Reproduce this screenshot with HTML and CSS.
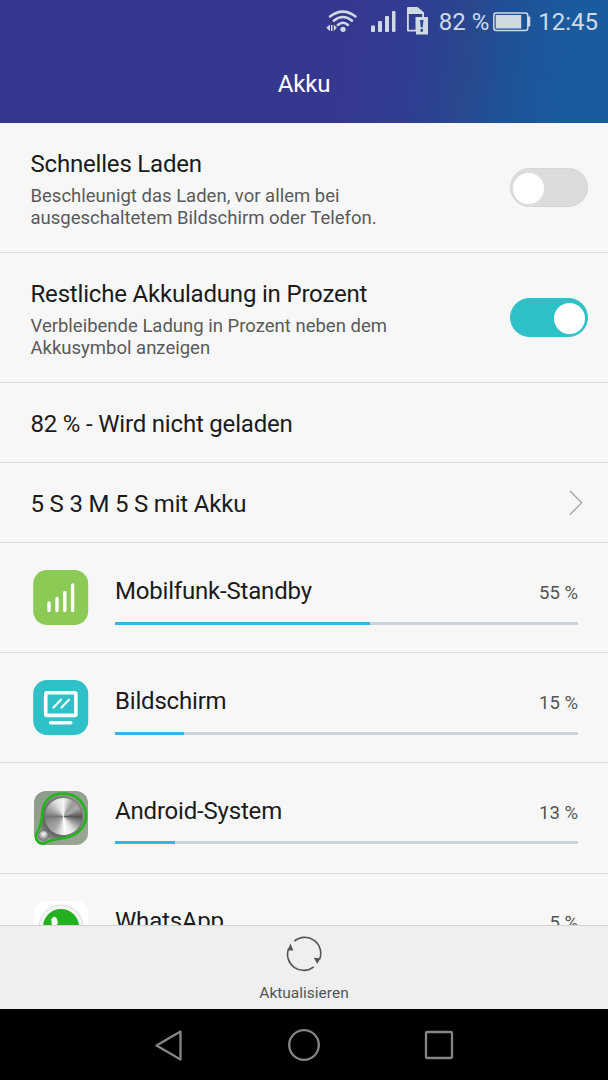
FILE: index.html
```html
<!DOCTYPE html>
<html lang="de">
<head>
<meta charset="utf-8">
<title>Akku</title>
<link rel="stylesheet" href="styles.css">
</head>
<body>
<div class="screen">
  <header class="header">
    <div class="status">
      <svg class="signals" width="104" height="44" viewBox="326 0 104 44" fill="#d0dae4">
        <g fill="none" stroke="#d0dae4" stroke-width="2.5" stroke-linecap="round">
          <path d="M330 16.500Q343 6.700 355.500 16.500"/><path d="M333.800 20.700Q343 13.300 352 20.700"/><path d="M337.800 25Q343 20.500 348 25"/>
        </g>
        <circle cx="343" cy="29.300" r="2.600"/>
        <path d="M330 24.500v6.500l-3.700-3.200zM331 25h1.500v6H331zM333.800 24.500l3 3.200-3 3.300z"/>
        <rect x="371" y="25.500" width="4" height="6.500" rx="1"/><rect x="378" y="21" width="4" height="11" rx="1"/><rect x="385" y="16" width="4" height="16" rx="1"/><rect x="392" y="11" width="3.500" height="21" rx="1"/>
        <path fill-rule="evenodd" d="M408 7h9.500l6.500 5.500V17h4v17.500h-12V31.500H408a1 1 0 0 1-1-1V8a1 1 0 0 1 1-1zM408.800 14v15.700h6.700V17h6.700V14z"/>
        <path fill="#264b94" d="M420 20h3.500l-.8 7.500h-1.900zM420.500 29h2.500v2.800h-2.500z"/>
      </svg>
      <span class="percent">82 %</span>
      <svg class="battery" width="38" height="44" viewBox="493 0 38 44">
        <rect x="493.800" y="13" width="34" height="17.500" rx="2.500" fill="none" stroke="#d0dae4" stroke-width="1.500"/>
        <rect x="495.700" y="15" width="25.500" height="13.500" fill="#d0dae4"/><path d="M528 16.500h1.400q.9 0 .9 1v8q0 1-.9 1H528" fill="#d0dae4"/>
      </svg>
      <span class="clock">12:45</span>
    </div>
    <h1 class="title">Akku</h1>
  </header>

  <main class="list">
    <section class="row setting">
      <div class="text"><h2 class="label">Schnelles Laden</h2><p class="desc">Beschleunigt das Laden, vor allem bei<br>ausgeschaltetem Bildschirm oder Telefon.</p></div>
      <div class="switch"><div class="knob"></div></div>
    </section>
    <section class="row setting">
      <div class="text"><h2 class="label">Restliche Akkuladung in Prozent</h2><p class="desc">Verbleibende Ladung in Prozent neben dem<br>Akkusymbol anzeigen</p></div>
      <div class="switch on"><div class="knob"></div></div>
    </section>
    <section class="row single"><h2 class="label">82 % - Wird nicht geladen</h2></section>
    <section class="row single">
      <h2 class="label">5 S 3 M 5 S mit Akku</h2>
      <svg class="chevron" width="14" height="28" viewBox="0 0 14 28"><path d="M1 1l11.700 11.800L1 24.500" fill="none" stroke="#999" stroke-width="1.100"/></svg>
    </section>

    <section class="row app">
      <svg class="icon" width="56" height="56" viewBox="0 0 56 56"><rect x=".2" y="0" width="55" height="55" rx="14" fill="#8aca55"/>
        <path d="M16 33v7.500M24 28.500v12M31.800 22.500v18M39.600 15v25.500" fill="none" stroke="#fff" stroke-width="3.400" stroke-linecap="round"/></svg>
      <div class="usage"><div class="line"><h2 class="label">Mobilfunk-Standby</h2><span class="value">55 %</span></div><div class="track"><div class="fill" style="width:55%"></div></div></div>
    </section>
    <section class="row app">
      <svg class="icon" width="56" height="56" viewBox="0 0 56 56"><rect x=".2" y="0" width="55" height="55" rx="14" fill="#2fc1c8"/>
        <rect x="12.700" y="12.700" width="30.200" height="22.700" rx="1.500" fill="none" stroke="#fff" stroke-width="3.600"/>
        <path d="M17.500 42.700h20.300" stroke="#fff" stroke-width="3.400" stroke-linecap="round"/><path d="M20.500 27.500l7.500-7.800M28.500 27.500l7.500-7.800" stroke="#fff" stroke-width="2.200" stroke-linecap="round"/></svg>
      <div class="usage"><div class="line"><h2 class="label">Bildschirm</h2><span class="value">15 %</span></div><div class="track"><div class="fill" style="width:15%"></div></div></div>
    </section>
    <section class="row app">
      <svg class="icon" width="56" height="56" viewBox="0 0 56 56">
        <defs>
          <linearGradient id="plate" x2="1" y2="1"><stop stop-color="#8e9b8b"/><stop offset="1" stop-color="#9aa795"/></linearGradient>
          <radialGradient id="shade"><stop offset=".6" stop-color="#555"/><stop offset="1" stop-color="#99a096"/></radialGradient>
        </defs>
        <rect x="1" y="1" width="54" height="54" rx="12" fill="url(#plate)"/>
        <path d="M9.500 22C10.500 8 21 3 31 3.500C44 4 53 14 53 26C53 39 42 46 32 48C24 49 17 50 12 53C7 55 2 51 3 45C7 38 9 31 9.500 22Z" fill="url(#shade)" stroke="#20b51a" stroke-width="2.600"/>
        <foreignObject x="11" y="7" width="39" height="39"><div class="dial"></div></foreignObject>
        <foreignObject x="5" y="40" width="11" height="11"><div class="dial small"></div></foreignObject>
      </svg>
      <div class="usage"><div class="line"><h2 class="label">Android-System</h2><span class="value">13 %</span></div><div class="track"><div class="fill" style="width:13%"></div></div></div>
    </section>
    <section class="row app">
      <svg class="icon" width="56" height="56" viewBox="0 0 56 56"><rect x="1" y="1" width="54" height="54" rx="12" fill="#fff"/>
        <circle cx="28" cy="27" r="22" fill="#f4f4f4" stroke="#dedede"/><circle cx="28" cy="27" r="18" fill="#25b01f"/>
        <path d="M18.500 19q3-4.500 5.500 0l1 4q-3 3 1 7 5 5 8 2l5 3q-1 6-7 5-14-4-13.500-21z" fill="#fff"/></svg>
      <div class="usage"><div class="line"><h2 class="label">WhatsApp</h2><span class="value">5 %</span></div><div class="track"><div class="fill" style="width:5%"></div></div></div>
    </section>
  </main>

  <footer class="toolbar">
    <svg class="refresh" width="36" height="36" viewBox="0 0 36 36"><g fill="none" stroke="#555" stroke-width="1.600"><path d="M8.300 5.200A16 16 0 0 1 33.500 23.500"/><path d="M27.700 30.800A16 16 0 0 1 2.700 12.500"/></g><path d="M4.500 7.500l2.800 7H1.500zM31.300 28l-3.500-6.300 6.500.6z" fill="#555"/></svg>
    <span class="action">Aktualisieren</span>
  </footer>
  <nav class="nav">
    <svg width="30" height="34" viewBox="0 0 30 34"><path d="M26.500 3.500v28L2.500 17.500z"/></svg>
    <svg width="34" height="34" viewBox="0 0 34 34"><circle cx="17" cy="17" r="14.800"/></svg>
    <svg width="30" height="34" viewBox="0 0 30 34"><rect x="2" y="4" width="26" height="26" rx="1"/></svg>
  </nav>
</div>
</body>
</html>
```
FILE: styles.css
```css
* { box-sizing: border-box; }
body { margin: 0; font-family: Roboto, "Liberation Sans", sans-serif; background: #f7f7f7; }
h1, h2, p { margin: 0; font-weight: 400; }
svg { display: block; flex: none; }
.screen { width: 608px; height: 1080px; display: flex; flex-direction: column; overflow: hidden; }
.header { flex: none; height: 123px; background: linear-gradient(98deg, #36388f 0%, #36388f 56%, #313c92 66%, #29488f 76%, #205196 82%, #195b9e 92%, #185b9f 100%); }
.status { height: 44px; display: flex; justify-content: flex-end; align-items: center; padding-right: 10px; color: #d0dae4; font-size: 24px; line-height: 45px; white-space: nowrap; }
.percent { margin-left: 9px; }
.battery { margin-left: 4px; }
.clock { margin-left: 7px; }
.title { color: #fff; font-size: 24px; line-height: 28px; letter-spacing: -.2px; text-align: center; margin-top: 26px; }
.list { flex: none; height: 801.5px; overflow: hidden; }
.row { display: flex; border-bottom: 1px solid #dcdcdc; }
.label { font-size: 24px; line-height: 28px; letter-spacing: -.19px; color: #1b1b1b; white-space: nowrap; }
.setting { height: 130px; padding: 27px 20px 0 30.5px; justify-content: space-between; }
.desc { font-size: 18.5px; line-height: 22px; color: #5a5a5a; margin-top: 7px; white-space: nowrap; }
.switch { width: 78px; height: 39px; margin-top: 18px; border-radius: 20px; padding: 3.5px 2px; display: flex; background: #dcdcdc; border: 1px solid #d5d5d5; }
.switch.on { background: #2fc1c8; border-color: #2fc1c8; justify-content: flex-end; }
.knob { width: 31px; height: 31px; border-radius: 50%; background: #fff; }
.single { height: 80px; align-items: center; justify-content: space-between; padding: 3px 25px 0 30.5px; }
.app { height: 110.2px; padding: 27px 30px 0 33px; gap: 26px; }
.app:nth-child(7) { padding-top: 26.5px; }
.app:nth-child(8) { padding-top: 26.3px; }
.usage { flex: 1; padding-top: 7px; }
.line { display: flex; justify-content: space-between; align-items: baseline; height: 44.5px; }
.value { font-size: 18.5px; color: #555; }
.track { height: 3px; background: #cad3dc; }
.fill { height: 3px; background: #35b4e6; }
.dial { width: 39px; height: 39px; border-radius: 50%; border: 1.5px solid #777; background: conic-gradient(#f4f4f4, #999 35deg, #aaa 60deg, #555 90deg, #888 110deg, #ddd 145deg, #fff 175deg, #aaa 215deg, #999 240deg, #777 270deg, #aaa 300deg, #ddd 330deg, #f4f4f4); }
.dial.small { width: 11px; height: 11px; background: radial-gradient(circle at 50% 35%, #fff, #888 70%); }
.toolbar { flex: none; height: 84.5px; background: #efefef; border-top: 1px solid #d2d2d2; display: flex; flex-direction: column; align-items: center; padding-top: 10.5px; }
.action { margin-top: 11px; font-size: 15.5px; line-height: 20px; color: #555; }
.nav { flex: none; height: 71px; background: #000; display: flex; justify-content: space-between; align-items: center; padding: 1px 154px 0; }
.nav svg { fill: none; stroke: #858585; stroke-width: 2.3; stroke-linejoin: round; }
```
